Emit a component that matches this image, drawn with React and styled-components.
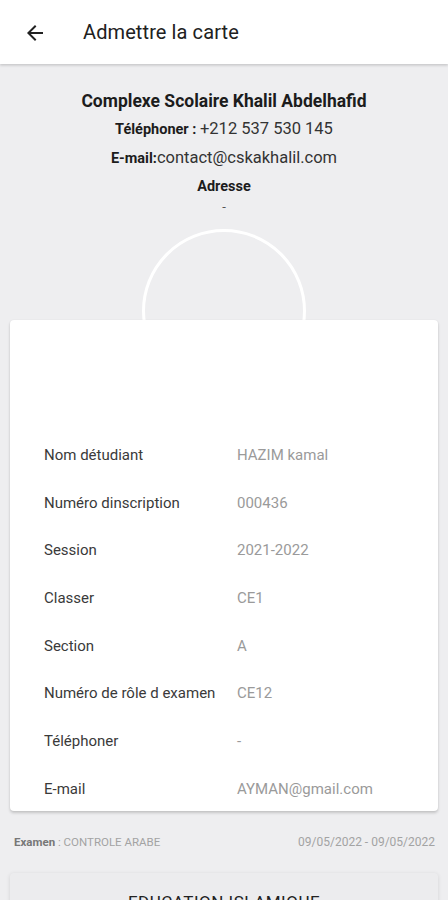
import React from "react";
import styled, { createGlobalStyle } from "styled-components";

const Global = createGlobalStyle`
  html, body { margin: 0; padding: 0; background: #eeeef0; }
  body { font-family: Roboto, "Noto Sans", sans-serif; -webkit-font-smoothing: antialiased; }
  * { box-sizing: border-box; }
`;

const Page = styled.div`
  width: 448px;
  height: 900px;
  overflow: hidden;
  background: #eeeef0;
  display: flex;
  flex-direction: column;
`;

const Header = styled.header`
  height: 64px;
  flex: 0 0 64px;
  background: #ffffff;
  display: flex;
  align-items: center;
  padding-left: 22px;
  box-shadow: 0 1px 3px rgba(0, 0, 0, 0.12), 0 2px 2px rgba(0, 0, 0, 0.06);
  position: relative;
  z-index: 2;
`;

const BackButton = styled.button`
  width: 26px;
  height: 26px;
  padding: 0;
  border: 0;
  background: none;
  display: flex;
  align-items: center;
  justify-content: center;
  margin-right: 35px;
  margin-top: 2px;
`;

const Title = styled.h1`
  margin: 0;
  font-size: 20px;
  font-weight: 400;
  color: #212121;
  letter-spacing: 0.1px;
`;

const School = styled.section`
  display: flex;
  flex-direction: column;
  align-items: center;
  padding-top: 27px;
  color: #1c1c1c;
  text-align: center;
`;

const SchoolName = styled.div`
  font-size: 17.5px;
  font-weight: 700;
  line-height: 20px;
`;

const InfoLine = styled.div`
  font-size: 16.5px;
  line-height: 20px;
  margin-top: ${(p) => p.$gap || 8}px;
  color: #333;
`;

const InfoLabel = styled.span`
  font-size: 14.5px;
  font-weight: 700;
  color: #1c1c1c;
`;

const Dash = styled.div`
  font-size: 13px;
  line-height: 16px;
  color: #555;
  margin-top: 2px;
`;

const Ring = styled.div`
  width: 164px;
  height: 164px;
  border-radius: 50%;
  border: 3px solid #ffffff;
  align-self: center;
  margin-top: 14px;
  flex: 0 0 auto;
`;

const Card = styled.div`
  position: relative;
  z-index: 1;
  margin: -73px 10px 0;
  background: #ffffff;
  border-radius: 4px;
  box-shadow: 0 2px 3px rgba(0, 0, 0, 0.18), 0 0 2px rgba(0, 0, 0, 0.06);
  padding: 111px 0 0;
  height: 491px;
  flex: 0 0 auto;
`;

const Row = styled.div`
  display: grid;
  grid-template-columns: 193px 1fr;
  padding-left: 34px;
  height: 47.7px;
  align-items: center;
  font-size: 15px;
`;

const Label = styled.span`
  color: #3a3a3a;
`;

const Value = styled.span`
  color: #9a9a9a;
`;

const ExamBar = styled.div`
  display: flex;
  justify-content: space-between;
  align-items: center;
  padding: 0 13px 0 14px;
  margin-top: 24px;
  font-size: 11.5px;
  color: #a3a3a3;
`;

const ExamLabel = styled.span`
  font-weight: 700;
  color: #777;
`;

const DateRange = styled.span`
  font-size: 12px;
`;

const SubjectCard = styled.div`
  margin: 24px 10px 0;
  background: #ececee;
  border-radius: 4px;
  box-shadow: 0 1px 4px rgba(0, 0, 0, 0.12);
  height: 60px;
  display: flex;
  justify-content: center;
  padding-top: 19px;
  font-size: 17px;
  letter-spacing: 0.5px;
  color: #222;
  flex: 0 0 auto;
`;

const rows = [
  ["Nom détudiant", "HAZIM kamal"],
  ["Numéro dinscription", "000436"],
  ["Session", "2021-2022"],
  ["Classer", "CE1"],
  ["Section", "A"],
  ["Numéro de rôle d examen", "CE12"],
  ["Téléphoner", "-"],
  ["E-mail", "AYMAN@gmail.com"],
];

export default function App() {
  return (
    <>
      <Global />
      <Page>
        <Header>
          <BackButton aria-label="Retour">
            <svg width="24" height="24" viewBox="0 0 24 24">
              <path
                d="M20 11H7.83l5.59-5.59L12 4l-8 8 8 8 1.41-1.41L7.83 13H20v-2z"
                fill="#212121"
              />
            </svg>
          </BackButton>
          <Title>Admettre la carte</Title>
        </Header>
        <School>
          <SchoolName>Complexe Scolaire Khalil Abdelhafid</SchoolName>
          <InfoLine>
            <InfoLabel>Téléphoner : </InfoLabel>+212 537 530 145
          </InfoLine>
          <InfoLine>
            <InfoLabel>E-mail:</InfoLabel>contact@cskakhalil.com
          </InfoLine>
          <InfoLine $gap={7}>
            <InfoLabel>Adresse</InfoLabel>
          </InfoLine>
          <Dash>-</Dash>
        </School>
        <Ring />
        <Card>
          {rows.map(([l, v]) => (
            <Row key={l}>
              <Label>{l}</Label>
              <Value>{v}</Value>
            </Row>
          ))}
        </Card>
        <ExamBar>
          <span>
            <ExamLabel>Examen</ExamLabel> : CONTROLE ARABE
          </span>
          <DateRange>09/05/2022 - 09/05/2022</DateRange>
        </ExamBar>
        <SubjectCard>EDUCATION ISLAMIQUE</SubjectCard>
      </Page>
    </>
  );
}
